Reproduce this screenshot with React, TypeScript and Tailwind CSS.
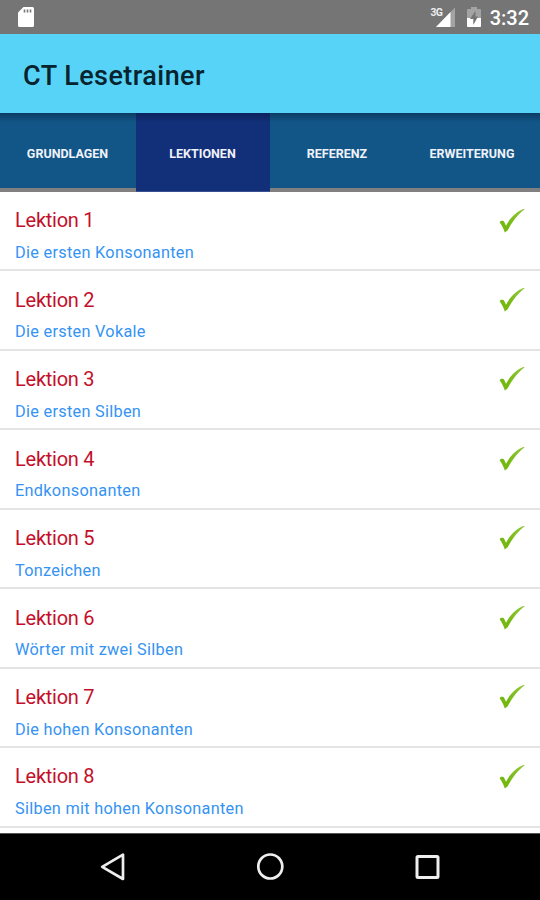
import React, { useState } from 'react';

interface Lesson {
  title: string;
  description: string;
}

const tabs = ['GRUNDLAGEN', 'LEKTIONEN', 'REFERENZ', 'ERWEITERUNG'];

const lessons: Lesson[] = [
  { title: 'Lektion 1', description: 'Die ersten Konsonanten' },
  { title: 'Lektion 2', description: 'Die ersten Vokale' },
  { title: 'Lektion 3', description: 'Die ersten Silben' },
  { title: 'Lektion 4', description: 'Endkonsonanten' },
  { title: 'Lektion 5', description: 'Tonzeichen' },
  { title: 'Lektion 6', description: 'Wörter mit zwei Silben' },
  { title: 'Lektion 7', description: 'Die hohen Konsonanten' },
  { title: 'Lektion 8', description: 'Silben mit hohen Konsonanten' },
];

function StatusBar() {
  return (
    <div className="h-[34px] shrink-0 bg-[#757575] flex items-center justify-between pl-[17px] pr-[11px] text-white">
      <svg width="18" height="22" viewBox="0 0 18 22">
        <path d="M6.5 1H15.5Q17 1 17 2.5V19.5Q17 21 15.5 21H2.5Q1 21 1 19.5V6.5Z" fill="#fff" />
        <path d="M7.5 3.5V6.5M10.5 3.5V6.5M13.5 3.5V6.5" stroke="#757575" strokeWidth="1.6" />
      </svg>
      <div className="flex items-center">
        <svg width="26" height="22" viewBox="0 0 26 22">
          <path d="M25 1.5V21H6Z" fill="#a3a3a3" />
          <path d="M20.5 6V21H6Z" fill="#fff" />
          <text x="0.5" y="9.5" fontFamily="Roboto, sans-serif" fontSize="10.5" fontWeight="700" fill="#eee" stroke="#757575" strokeWidth="1" paintOrder="stroke" textLength="12.5">3G</text>
        </svg>
        <svg className="ml-[10px]" width="16" height="22" viewBox="0 0 16 22">
          <path d="M5 1H11V3H14Q15 3 15 4V20Q15 21 14 21H2Q1 21 1 20V4Q1 3 2 3H5Z" fill="#a3a3a3" />
          <path d="M1 12H15V20Q15 21 14 21H2Q1 21 1 20Z" fill="#fff" />
          <path d="M9.5 5L4 13H7.3V19L12 10.5H9.5Z" fill="#757575" />
        </svg>
        <span className="ml-[8px] mt-[2px] text-[20px] leading-none font-medium">3:32</span>
      </div>
    </div>
  );
}

function CheckMark() {
  return (
    <svg className="shrink-0" width="28" height="28" viewBox="0 0 28 28">
      <defs>
        <linearGradient id="check" x1="0" y1="1" x2="1" y2="0">
          <stop offset="0.3" stopColor="#74b810" />
          <stop offset="1" stopColor="#93c83c" />
        </linearGradient>
      </defs>
      <path
        d="M1.6 15.2C3 13.4 5.4 13.3 6.4 15.2L8 18.8C12 11.2 18 4.6 26 1.8L26.5 2.5C20 7 14 15.2 9.7 23.3L6.8 25.4C5.5 21.5 3.8 18 1.6 15.2Z"
        fill="url(#check)"
      />
    </svg>
  );
}

function NavigationBar() {
  return (
    <nav className="h-[67px] shrink-0 bg-black border-t border-[#555] flex justify-center gap-[129px]">
      <svg className="mt-[18px]" width="28" height="30" viewBox="0 0 28 30" fill="none" stroke="#eee" strokeWidth="2.7" strokeLinejoin="round">
        <path d="M24 2.7V27L3.2 14.8Z" />
      </svg>
      <svg className="mt-[18px]" width="28" height="30" viewBox="0 0 28 30" fill="none" stroke="#eee" strokeWidth="2.7">
        <circle cx="14.3" cy="14.5" r="12" />
      </svg>
      <svg className="mt-[18px]" width="28" height="30" viewBox="0 0 28 30" fill="none" stroke="#eee" strokeWidth="3">
        <rect x="4" y="4.5" width="21" height="21" rx="1" />
      </svg>
    </nav>
  );
}

function App() {
  const [activeTab, setActiveTab] = useState('LEKTIONEN');

  return (
    <div className="w-[540px] h-[900px] flex flex-col overflow-hidden bg-white font-[Roboto,sans-serif]">
      <StatusBar />

      <header className="h-[79px] shrink-0 bg-[#57d3f8] flex items-center pl-[23px] pt-[5px]">
        <h1 className="text-[27px] leading-none tracking-[0.45px] font-medium text-[#07232e]">CT Lesetrainer</h1>
      </header>

      <div className="h-[79px] shrink-0 grid grid-cols-[136px_134px_135px_135px] bg-[#115687]">
        {tabs.map((tab) => (
          <button
            key={tab}
            onClick={() => setActiveTab(tab)}
            className={
              tab === activeTab
                ? 'bg-linear-to-b from-[#0c235c] to-[#122f79] to-12% border-b border-[#3b5191] pt-[4px] pr-[1px] text-[12.5px] font-bold text-[#f0f2fa]'
                : 'bg-linear-to-b from-[#0b3c63] to-[#115687] to-12% border-b-4 border-[#808080] pt-[7px] pr-[1px] text-[12.5px] font-bold text-[#f0f2fa]'
            }
          >
            {tab}
          </button>
        ))}
      </div>

      <main className="flex-1 overflow-hidden bg-white">
        {lessons.map((lesson) => (
          <div
            key={lesson.title}
            className="h-[79.45px] flex justify-between border-b-2 border-[#e4e4e4] pl-[15px] pr-[14px]"
          >
            <div className="pt-[16.4px]">
              <h2 className="text-[20px] leading-[24px] tracking-[-0.25px] text-[#c40f2b]">{lesson.title}</h2>
              <p className="mt-[10.6px] text-[16.3px] leading-[20px] tracking-[0.29px] text-[#3593f3]">
                {lesson.description}
              </p>
            </div>
            <div className="pt-[14.5px]">
              <CheckMark />
            </div>
          </div>
        ))}
      </main>

      <NavigationBar />
    </div>
  );
}

export default App;
